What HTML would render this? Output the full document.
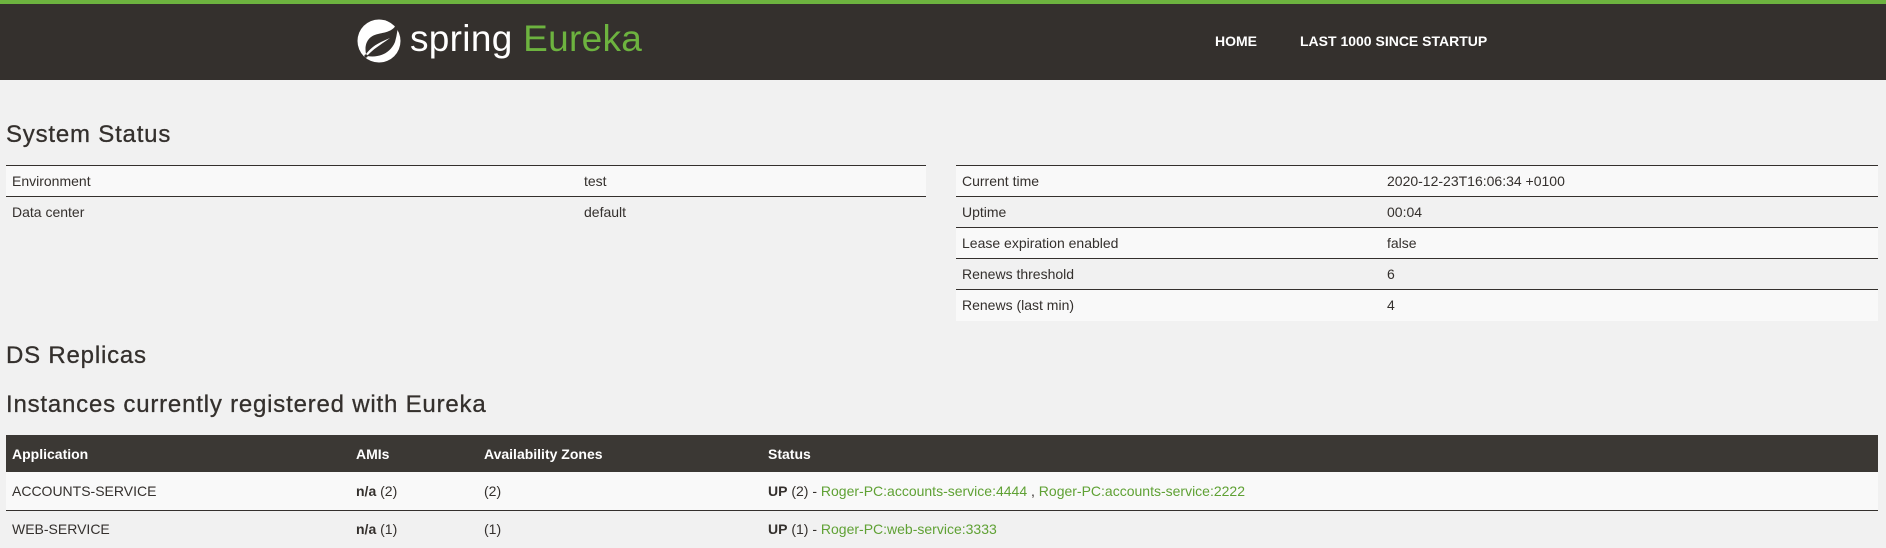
<!DOCTYPE html>
<html><head><meta charset="utf-8"><style>
*{margin:0;padding:0;box-sizing:border-box}
body{width:1886px;height:545px;overflow:hidden;background:#f1f1f1;font-family:"Liberation Sans",sans-serif;color:#34302d;position:relative}
.hdr{position:absolute;left:0;top:0;width:1886px;height:80px;background:#34302d;border-top:4px solid #6db33f}
.brand{position:absolute;left:410px;top:14px;font-size:37px;color:#fff;letter-spacing:0.3px}
.brand span{color:#6db33f}
.nav{position:absolute;top:29px;font-size:14px;font-weight:bold;color:#fff}
h2{position:absolute;left:6px;font-size:24px;font-weight:normal;letter-spacing:0.8px;color:#34302d;-webkit-text-stroke:0.3px #34302d}
table{position:absolute;border-collapse:collapse;font-size:14px}
td{height:31px;padding:0 0 0 6px;vertical-align:middle;border-top:1px solid #34302d}
tr.o td{background:#f9f9f9}
.it td{height:38px}
.it th{height:37px;background:#3b3834;color:#fff;text-align:left;padding-left:6px;font-size:14px}
a{color:#5fa134;text-decoration:none}
</style></head><body>
<div class="hdr">
<svg style="position:absolute;left:356px;top:14px" width="46" height="46" viewBox="0 0 46 46">
<circle cx="23" cy="23" r="21.5" fill="#fff"/>
<path d="M42 3 C38 14 30 14 22 16 C12 18 8 26 10 36 C16 28 24 24 34 20 C26 26 18 30 11 38 C22 40 34 36 39 24 C41 17 42 10 42 3Z" fill="#34302d"/>
<circle cx="10" cy="38" r="1.6" fill="#34302d"/>
</svg>
<div class="brand">spring <span>Eureka</span></div>
<div class="nav" style="left:1215px">HOME</div>
<div class="nav" style="left:1300px">LAST 1000 SINCE STARTUP</div>
</div>
<h2 style="top:121px">System Status</h2>
<table style="left:6px;top:165px;width:920px">
<tr class="o"><td style="width:572px">Environment</td><td>test</td></tr>
<tr><td>Data center</td><td>default</td></tr>
</table>
<table style="left:956px;top:165px;width:922px">
<tr class="o"><td style="width:425px">Current time</td><td>2020-12-23T16:06:34 +0100</td></tr>
<tr><td>Uptime</td><td>00:04</td></tr>
<tr class="o"><td>Lease expiration enabled</td><td>false</td></tr>
<tr><td>Renews threshold</td><td>6</td></tr>
<tr class="o"><td>Renews (last min)</td><td>4</td></tr>
</table>
<h2 style="top:342px">DS Replicas</h2>
<h2 style="top:391px">Instances currently registered with Eureka</h2>
<table class="it" style="left:6px;top:435px;width:1872px">
<tr><th style="width:344px">Application</th><th style="width:128px">AMIs</th><th style="width:284px">Availability Zones</th><th>Status</th></tr>
<tr class="o"><td style="border-top:none">ACCOUNTS-SERVICE</td><td style="border-top:none"><b>n/a</b> (2)</td><td style="border-top:none">(2)</td><td style="border-top:none"><b>UP</b> (2) - <a>Roger-PC:accounts-service:4444</a> , <a>Roger-PC:accounts-service:2222</a></td></tr>
<tr><td>WEB-SERVICE</td><td><b>n/a</b> (1)</td><td>(1)</td><td><b>UP</b> (1) - <a>Roger-PC:web-service:3333</a></td></tr>
</table>
</body></html>
